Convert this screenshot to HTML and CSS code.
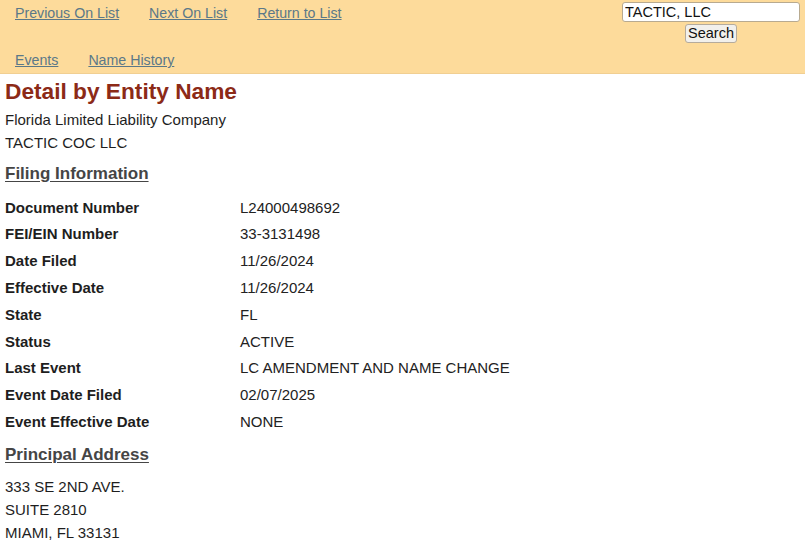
FILE: index.html
```html
<!DOCTYPE html>
<html>
<head>
<meta charset="utf-8">
<link rel="stylesheet" href="styles.css">
</head>
<body>
<header class="topbar">
  <nav class="nav">
    <div class="nav-row">
      <a href="#">Previous On List</a>
      <a href="#">Next On List</a>
      <a href="#">Return to List</a>
    </div>
    <div class="nav-row">
      <a href="#">Events</a>
      <a href="#">Name History</a>
    </div>
  </nav>
  <form class="search">
    <input class="search-input" type="text" value="TACTIC, LLC">
    <button class="search-btn" type="button">Search</button>
  </form>
</header>
<main class="detail">
  <h1 class="title">Detail by Entity Name</h1>
  <p class="line">Florida Limited Liability Company</p>
  <p class="line">TACTIC COC LLC</p>
  <h2 class="section">Filing Information</h2>
  <div class="filing">
    <span class="label">Document Number</span><span class="value">L24000498692</span>
    <span class="label">FEI/EIN Number</span><span class="value">33-3131498</span>
    <span class="label">Date Filed</span><span class="value">11/26/2024</span>
    <span class="label">Effective Date</span><span class="value">11/26/2024</span>
    <span class="label">State</span><span class="value">FL</span>
    <span class="label">Status</span><span class="value">ACTIVE</span>
    <span class="label">Last Event</span><span class="value">LC AMENDMENT AND NAME CHANGE</span>
    <span class="label">Event Date Filed</span><span class="value">02/07/2025</span>
    <span class="label">Event Effective Date</span><span class="value">NONE</span>
  </div>
  <h2 class="section section-addr">Principal Address</h2>
  <div class="address">
    <span>333 SE 2ND AVE.</span>
    <span>SUITE 2810</span>
    <span>MIAMI, FL 33131</span>
  </div>
</main>
</body>
</html>
```
FILE: styles.css
```css
html, body {
  margin: 0;
  padding: 0;
  background: #ffffff;
  font-family: "Liberation Sans", Arial, sans-serif;
  color: #1e1e1e;
}

.topbar {
  display: flex;
  justify-content: space-between;
  height: 73px;
  background: #fddb9b;
  border-bottom: 1px solid #f1cf92;
}

.nav {
  display: flex;
  flex-direction: column;
  gap: 31px;
  padding: 5px 0 0 15px;
}

.nav-row {
  display: flex;
  gap: 30px;
  font-size: 14.2px;
  line-height: 16px;
}

.nav-row a {
  color: #5b7888;
  text-decoration: underline;
}

.search {
  display: flex;
  flex-direction: column;
  align-items: center;
  gap: 2px;
  padding: 2px 5px 0 0;
}

.search-input {
  box-sizing: border-box;
  width: 178px;
  height: 20px;
  margin: 0;
  padding: 0 2px;
  font-family: "Liberation Sans", Arial, sans-serif;
  font-size: 14.5px;
  color: #111;
  background: #fff;
  border: 1px solid #b8aa90;
  border-radius: 3px;
}

.search-btn {
  box-sizing: border-box;
  height: 19px;
  margin: 0;
  padding: 0 2px;
  font-family: "Liberation Sans", Arial, sans-serif;
  font-size: 14.5px;
  line-height: 15px;
  color: #111;
  background: #f2f0ec;
  border: 1px solid #b5ab9c;
  border-radius: 3px;
}

.detail {
  padding: 4px 0 0 5px;
}

.title {
  margin: 0 0 4px 0;
  font-size: 22.7px;
  line-height: 26px;
  font-weight: bold;
  color: #8c2a17;
}

.line {
  margin: 0;
  font-size: 15px;
  line-height: 23px;
}

.section {
  margin: 9px 0 0 0;
  font-size: 17px;
  line-height: 22px;
  font-weight: bold;
  color: #454545;
  text-decoration: underline;
  text-underline-offset: 2px;
}

.filing {
  display: grid;
  grid-template-columns: 235px auto;
  grid-auto-rows: 26.8px;
  align-items: center;
  margin-top: 8.8px;
  font-size: 15px;
}

.label {
  font-weight: bold;
  color: #1e1e1e;
}

.value {
  color: #222;
}

.section-addr {
  margin-top: 9px;
}

.address {
  display: flex;
  flex-direction: column;
  margin-top: 10.5px;
  font-size: 15px;
  line-height: 22.7px;
}
```
